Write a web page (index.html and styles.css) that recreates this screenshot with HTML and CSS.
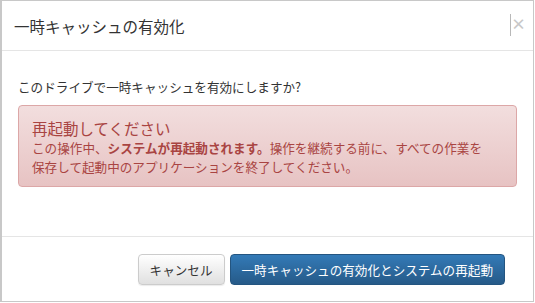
FILE: index.html
```html
<!DOCTYPE html>
<html lang="ja">
<head>
    <meta charset="UTF-8">
    <title>一時キャッシュの有効化</title>
    <link rel="stylesheet" href="styles.css">
</head>
<body>

    <div class="modal">
        <!-- Header -->
        <div class="modal-header">
            <h4 class="modal-title">一時キャッシュの有効化</h4>
            <span class="close">×</span>
        </div>

        <!-- Body -->
        <div class="modal-body">
            <p class="question">このドライブで一時キャッシュを有効にしますか?</p>
            <div class="alert">
                <div class="alert-title">再起動してください</div>
                <p>この操作中、<strong>システムが再起動されます。</strong>操作を継続する前に、すべての作業を保存して起動中のアプリケーションを終了してください。</p>
            </div>
        </div>

        <!-- Footer -->
        <div class="modal-footer">
            <button class="btn btn-default">キャンセル</button>
            <button class="btn btn-primary">一時キャッシュの有効化とシステムの再起動</button>
        </div>
    </div>

</body>
</html>
```

FILE: styles.css
```css
body {
    margin: 0;
    padding: 0;
    background: #fff;
    font-family: "Noto Sans CJK JP", "Liberation Sans", sans-serif;
    color: #333;
}

.modal {
    width: 531px;
    height: 300px;
    border: 1px solid #c8c8c8;
    border-left-width: 2px;
    background: #fff;
    display: flex;
    flex-direction: column;
}

.modal-header {
    height: 49px;
    display: flex;
    align-items: center;
    padding: 0 13px 0 12px;
    border-bottom: 1px solid #e5e5e5;
}

.modal-title {
    margin: 0;
    font-size: 15.5px;
    font-weight: normal;
    line-height: 20px;
    color: #333;
}

.close {
    margin-left: auto;
    margin-bottom: 2px;
    height: 22px;
    width: 9px;
    border-left: 1px solid #b8b8b8;
    color: #c8c8c8;
    font-size: 15px;
    font-weight: bold;
    line-height: 20px;
    text-align: right;
}

.modal-body {
    height: 185px;
    padding: 27px 16px 0 16px;
    box-sizing: border-box;
}

.question {
    margin: 0 0 9px 0;
    font-size: 12.6px;
    line-height: 18px;
}

.alert {
    padding: 12px 26px 10px 13px;
    border: 1px solid #dca7a7;
    border-radius: 4px;
    background: linear-gradient(to bottom, #f2dede 0%, #e7c3c3 100%);
    color: #a94442;
}

.alert-title {
    font-size: 15.5px;
    line-height: 20px;
}

.alert p {
    margin: 0;
    font-size: 12.6px;
    line-height: 19px;
}

.alert strong {
    font-weight: bold;
}

.modal-footer {
    flex: 1;
    display: flex;
    justify-content: flex-end;
    align-items: flex-start;
    gap: 5px;
    padding: 17px 28px 0 0;
    border-top: 1px solid #e5e5e5;
}

.btn {
    height: 31px;
    padding: 0 11px;
    border-radius: 4px;
    font-family: inherit;
    font-size: 12.6px;
    line-height: 29px;
    cursor: pointer;
}

.btn-default {
    border: 1px solid #ccc;
    background: linear-gradient(to bottom, #fff 0%, #e0e0e0 100%);
    color: #333;
    box-shadow: 0 1px 1px rgba(0, 0, 0, 0.08);
}

.btn-primary {
    border: 1px solid #245580;
    background: linear-gradient(to bottom, #337ab7 0%, #265a88 100%);
    color: #fff;
}
```
